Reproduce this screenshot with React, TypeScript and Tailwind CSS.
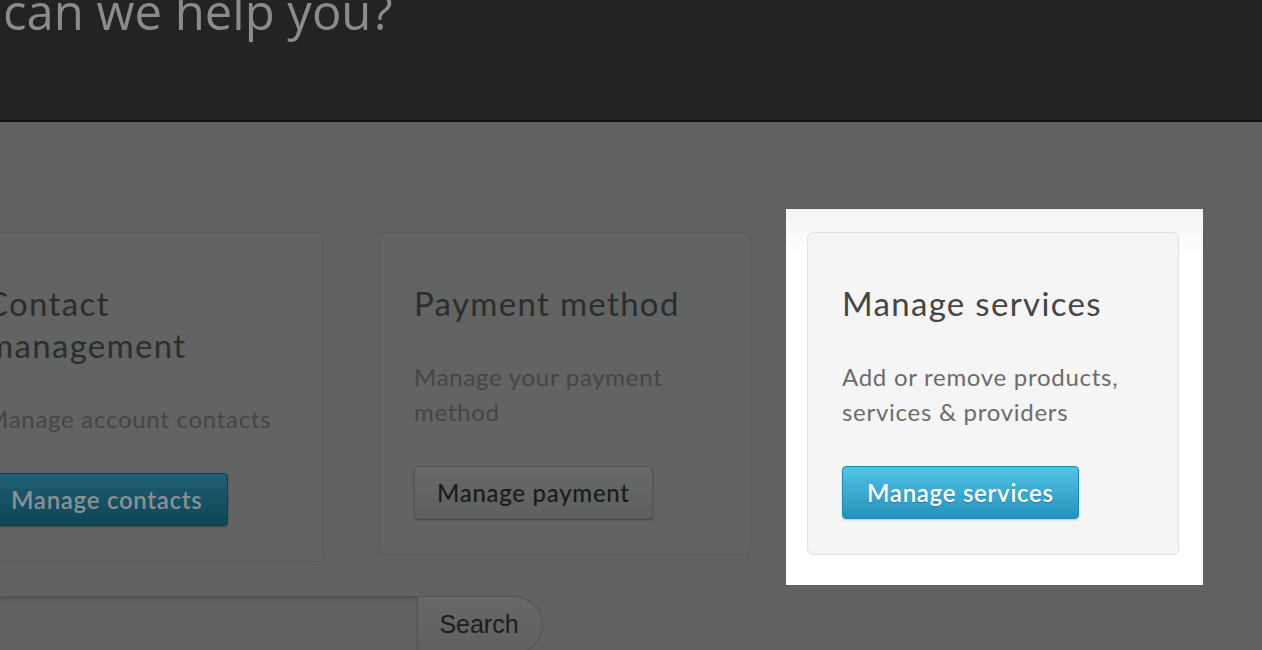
import React from "react";

type Card = {
  title: string[];
  desc: string[];
  action: string;
  variant: "primary" | "default";
};

const cards: Card[] = [
  {
    title: ["Contact", "management"],
    desc: ["Manage account contacts"],
    action: "Manage contacts",
    variant: "primary",
  },
  {
    title: ["Payment method"],
    desc: ["Manage your payment", "method"],
    action: "Manage payment",
    variant: "default",
  },
];

// Dimmed card, sits under the tour overlay
function DimmedCard({ card }: { card: Card }) {
  return (
    <div className="w-[372px] shrink-0 rounded-[6px] border border-[#585959] bg-[#626363] px-[34px] pt-[49px] pb-[35px]">
      <h3 className="text-[33px] leading-[42px] tracking-[0.04em] text-[#2c2d2e]">
        {card.title.map((t) => (
          <div key={t}>{t}</div>
        ))}
      </h3>
      <p className="mt-[35px] text-[24px] leading-[35px] tracking-[0.03em] text-[#454646]">
        {card.desc.map((t) => (
          <span key={t} className="block">
            {t}
          </span>
        ))}
      </p>
      {card.variant === "primary" ? (
        <button className="mt-[37px] h-[53px] rounded-[4px] border border-[#0e3f50] bg-gradient-to-b from-[#1f5f74] to-[#0e4556] px-6 text-[24px] font-semibold tracking-[0.03em] text-[#8a9093] shadow-[0_1px_2px_rgba(0,0,0,0.3)]">
          {card.action}
        </button>
      ) : (
        <button className="mt-[37px] h-[53px] rounded-[4px] border border-[#555656] bg-gradient-to-b from-[#676868] to-[#5e5f5f] px-[22px] text-[24px] font-medium tracking-[0.03em] text-[#1b1b1b] shadow-[0_1px_2px_rgba(0,0,0,0.35)]">
          {card.action}
        </button>
      )}
    </div>
  );
}

// Highlighted card, lifted above the overlay with a white frame
function HighlightCard() {
  return (
    <div className="relative w-[372px] shrink-0">
      <div className="absolute -top-[23px] -bottom-[30px] -left-[21px] -right-[24px] bg-gradient-to-b from-[#f2f3f4] via-white via-[12%] to-white" />
      <div className="relative rounded-[6px] border border-[#e2e2e2] bg-[#f5f5f5] px-[34px] pt-[49px] pb-[35px]">
        <h3 className="text-[33px] leading-[42px] tracking-[0.04em] text-[#454545]">Manage services</h3>
        <p className="mt-[35px] text-[24px] leading-[35px] tracking-[0.03em] text-[#6c6c6c]">
          <span className="block">Add or remove products,</span>
          <span className="block">services &amp; providers</span>
        </p>
        <button className="mt-[37px] h-[53px] rounded-[4px] border border-[#1d8ab2] bg-gradient-to-b from-[#52c3e8] to-[#2392bc] px-6 text-[24px] font-semibold tracking-[0.03em] text-white shadow-[0_1px_2px_rgba(0,0,0,0.2)] [text-shadow:0_1px_1px_rgba(0,0,0,0.2)]">
          Manage services
        </button>
      </div>
    </div>
  );
}

export default function App() {
  return (
    <div className="h-[650px] w-[1262px] overflow-hidden bg-[#606161] font-['Lato','Open_Sans',sans-serif]">
      {/* Header */}
      <header className="flex h-[122px] items-start border-b-2 border-[#121212] bg-[#232323] pl-[3px]">
        <h1 className="-mt-[13px] font-['Open_Sans',sans-serif] text-[49px] leading-none text-[#8b8b8b]">
          can we help you?
        </h1>
      </header>

      {/* Cards */}
      <div className="-ml-[49px] mt-[110px] flex items-start gap-[56px]">
        {cards.map((c) => (
          <DimmedCard key={c.action} card={c} />
        ))}
        <HighlightCard />
      </div>

      {/* Search */}
      <div className="-ml-[2px] mt-[34px] flex h-[58px] w-[545px]">
        <div className="flex-1 rounded-l-[4px] border border-[#535454] bg-[#5f6060] shadow-[inset_0_2px_3px_rgba(0,0,0,0.15)]" />
        <button className="w-[125px] rounded-r-[29px] border border-l-0 border-[#535454] bg-gradient-to-b from-[#666767] to-[#5f6060] pr-[2px] font-['Liberation_Sans',Arial,sans-serif] text-[25px] text-[#1d1d1d]">
          Search
        </button>
      </div>
    </div>
  );
}
